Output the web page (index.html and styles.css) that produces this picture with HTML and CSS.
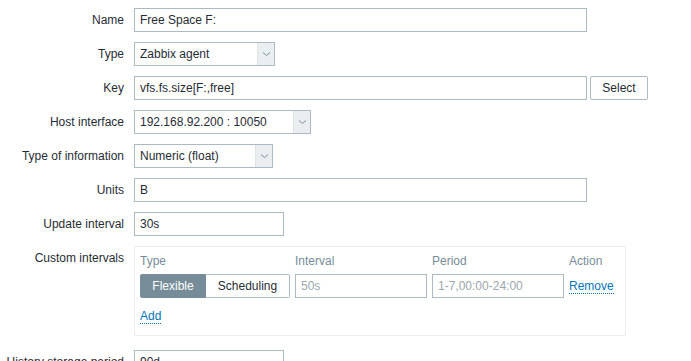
FILE: index.html
```html
<!DOCTYPE html>
<html lang="en">
<head>
    <meta charset="UTF-8">
    <meta name="viewport" content="width=device-width, initial-scale=1.0">
    <title>Item</title>
    <link rel="stylesheet" href="styles.css">
</head>
<body>
    <form class="form-list">
        <div class="form-row">
            <label class="form-label">Name</label>
            <div class="form-field">
                <input class="text-box wide" type="text" value="Free Space F:">
            </div>
        </div>

        <div class="form-row">
            <label class="form-label">Type</label>
            <div class="form-field">
                <div class="select w-type">
                    <span class="select-value">Zabbix agent</span>
                    <span class="select-arrow"><svg width="9" height="6" viewBox="0 0 9 6"><path d="M1 1.5 L4.5 4.5 L8 1.5" fill="none" stroke="#768d99" stroke-width="1"/></svg></span>
                </div>
            </div>
        </div>

        <div class="form-row">
            <label class="form-label">Key</label>
            <div class="form-field">
                <input class="text-box wide" type="text" value="vfs.fs.size[F:,free]">
                <button class="btn-grey" type="button">Select</button>
            </div>
        </div>

        <div class="form-row">
            <label class="form-label">Host interface</label>
            <div class="form-field">
                <div class="select w-interface">
                    <span class="select-value">192.168.92.200 : 10050</span>
                    <span class="select-arrow"><svg width="9" height="6" viewBox="0 0 9 6"><path d="M1 1.5 L4.5 4.5 L8 1.5" fill="none" stroke="#768d99" stroke-width="1"/></svg></span>
                </div>
            </div>
        </div>

        <div class="form-row">
            <label class="form-label">Type of information</label>
            <div class="form-field">
                <div class="select w-info">
                    <span class="select-value">Numeric (float)</span>
                    <span class="select-arrow"><svg width="9" height="6" viewBox="0 0 9 6"><path d="M1 1.5 L4.5 4.5 L8 1.5" fill="none" stroke="#768d99" stroke-width="1"/></svg></span>
                </div>
            </div>
        </div>

        <div class="form-row">
            <label class="form-label">Units</label>
            <div class="form-field">
                <input class="text-box wide" type="text" value="B">
            </div>
        </div>

        <div class="form-row">
            <label class="form-label">Update interval</label>
            <div class="form-field">
                <input class="text-box short" type="text" value="30s">
            </div>
        </div>

        <div class="form-row intervals-row">
            <label class="form-label">Custom intervals</label>
            <div class="form-field">
                <div class="table-forms">
                    <div class="interval-grid">
                        <span class="col-head">Type</span>
                        <span class="col-head">Interval</span>
                        <span class="col-head">Period</span>
                        <span class="col-head">Action</span>

                        <div class="radio-segmented">
                            <span class="seg active">Flexible</span>
                            <span class="seg">Scheduling</span>
                        </div>
                        <input class="text-box" type="text" placeholder="50s">
                        <input class="text-box" type="text" placeholder="1-7,00:00-24:00">
                        <span class="action-cell"><a class="link-action" href="#">Remove</a></span>
                    </div>
                    <div class="add-row">
                        <a class="link-action" href="#">Add</a>
                    </div>
                </div>
            </div>
        </div>

        <div class="form-row">
            <label class="form-label">History storage period</label>
            <div class="form-field">
                <input class="text-box short" type="text" value="90d">
            </div>
        </div>
    </form>
</body>
</html>
```

FILE: styles.css
```css
:root {
    --text-color: #1f2c33;
    --border-color: #acbbc2;
    --muted-color: #768d99;
    --link-color: #0275b8;
    --light-border: #ebeef0;
}

* {
    margin: 0;
    padding: 0;
    box-sizing: border-box;
}

body {
    font-family: 'Liberation Sans', Arial, sans-serif;
    font-size: 12px;
    color: var(--text-color);
    background-color: #ffffff;
    overflow: hidden;
}

.form-list {
    padding-top: 8px;
}

.form-row {
    display: flex;
    align-items: flex-start;
    margin-bottom: 10px;
}

.intervals-row {
    margin-bottom: 14px;
}

.form-label {
    width: 134px;
    padding-right: 10px;
    text-align: right;
    line-height: 24px;
    white-space: nowrap;
}

.form-field {
    display: flex;
    align-items: flex-start;
}

.text-box {
    height: 24px;
    border: 1px solid var(--border-color);
    padding: 0 5px;
    font-family: inherit;
    font-size: 12px;
    color: var(--text-color);
    background-color: #ffffff;
    outline: none;
}

.text-box::placeholder {
    color: #9aa7ad;
}

.wide {
    width: 453px;
}

.short {
    width: 150px;
}

.btn-grey {
    margin-left: 3px;
    width: 58px;
    height: 24px;
    border: 1px solid var(--border-color);
    border-radius: 2px;
    background-color: #ffffff;
    font-family: inherit;
    font-size: 12px;
    color: var(--text-color);
}

.select {
    display: flex;
    height: 24px;
    border: 1px solid var(--border-color);
    background-color: #ffffff;
}

.select-value {
    flex: 1;
    padding-left: 5px;
    line-height: 22px;
    white-space: nowrap;
}

.select-arrow {
    width: 17px;
    display: flex;
    align-items: center;
    justify-content: center;
    background-color: var(--light-border);
    border-left: 1px solid #dfe4e7;
}

.w-type {
    width: 141px;
}

.w-interface {
    width: 177px;
}

.w-info {
    width: 139px;
}

.table-forms {
    width: 492px;
    border: 1px solid var(--light-border);
    padding: 5px 5px 10px 5px;
}

.interval-grid {
    display: grid;
    grid-template-columns: 150px 132px 132px auto;
    column-gap: 5px;
    row-gap: 4px;
    align-items: center;
}

.col-head {
    color: var(--muted-color);
    line-height: 18px;
}

.interval-grid .text-box {
    width: 132px;
}

.radio-segmented {
    display: flex;
    height: 24px;
}

.seg {
    line-height: 22px;
    border: 1px solid var(--border-color);
    text-align: center;
}

.seg:first-child {
    width: 66px;
    border-radius: 2px 0 0 2px;
}

.seg:last-child {
    width: 84px;
    border-left: none;
    border-radius: 0 2px 2px 0;
}

.seg.active {
    background-color: var(--muted-color);
    border-color: var(--muted-color);
    color: #ffffff;
}

.link-action {
    color: var(--link-color);
    text-decoration: none;
    border-bottom: 1px dotted var(--link-color);
}

.add-row {
    margin-top: 9px;
    line-height: 18px;
}
```
